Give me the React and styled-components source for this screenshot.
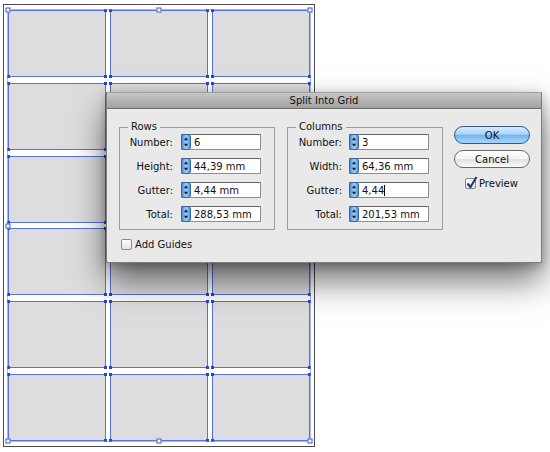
import React from "react";
import styled, { createGlobalStyle } from "styled-components";

const GlobalStyle = createGlobalStyle`
  body {
    margin: 0;
    background: #fff;
    font-family: "DejaVu Sans", "Liberation Sans", sans-serif;
  }
`;

const Stage = styled.div`
  position: relative;
  width: 550px;
  height: 452px;
  overflow: hidden;
  box-sizing: border-box;
  padding: 4px 0 0 3px;
  background: #fff;
`;

const Artboard = styled.div`
  width: 312px;
  height: 443px;
  box-sizing: border-box;
  border: 1px solid #4d4d4d;
  padding: 5px 4px;
`;

const Grid = styled.div`
  position: relative;
  display: grid;
  grid-template-columns: repeat(3, 98px);
  grid-template-rows: repeat(6, 1fr);
  column-gap: 4px;
  row-gap: 5.6px;
  height: 431px;
`;

const Cell = styled.div`
  position: relative;
  background: #dddcdf;
  border: 1px solid #5573dc;
`;

const Anchor = styled.span`
  position: absolute;
  width: 3px;
  height: 3px;
  background: #2447c9;
  ${(p) => (p.$top ? "top: -2px;" : "bottom: -2px;")}
  ${(p) => (p.$left ? "left: -2px;" : "right: -2px;")}
`;

const Bounds = styled.div`
  position: absolute;
  inset: -1px;
  border: 1px solid rgba(110, 140, 230, 0.6);
  pointer-events: none;
`;

const Handle = styled.span`
  position: absolute;
  width: 5px;
  height: 5px;
  box-sizing: border-box;
  background: #fff;
  border: 1px solid #3557d2;
  transform: translate(-50%, -50%);
`;

const Dialog = styled.div`
  position: absolute;
  left: 106px;
  top: 92px;
  width: 436px;
  height: 171px;
  box-sizing: border-box;
  border: 1px solid #7d7d7d;
  border-top-color: #a0a0a0;
  background: #e9e9e9;
  box-shadow: 0 18px 32px rgba(0, 0, 0, 0.55), 0 3px 10px rgba(0, 0, 0, 0.25);
  font-size: 10px;
  color: #111;
  display: flex;
  flex-direction: column;
`;

const TitleBar = styled.div`
  height: 15px;
  line-height: 15px;
  text-align: center;
  background: linear-gradient(#c6c6c6, #a2a2a2);
  border-bottom: 1px solid #6c6c6c;
`;

const Body = styled.div`
  padding: 11px 11px 0 12px;
  display: flex;
  flex-direction: column;
`;

const TopRow = styled.div`
  display: flex;
  align-items: flex-start;
`;

const Group = styled.fieldset`
  margin: 0 ${(p) => p.$gap}px 0 0;
  padding: 0 13px 7px 0;
  width: 156px;
  min-width: 0;
  box-sizing: border-box;
  border: 1px solid #9a9a9a;
`;

const Legend = styled.legend`
  margin-left: 8px;
  padding: 0 3px;
  line-height: 14px;
`;

const FieldList = styled.div`
  display: flex;
  flex-direction: column;
  gap: 8px;
`;

const FieldRow = styled.div`
  display: flex;
  align-items: center;
  height: 16px;
`;

const Label = styled.span`
  width: ${(p) => p.$w}px;
  margin-right: ${(p) => p.$gap}px;
  text-align: right;
  white-space: nowrap;
`;

const Field = styled.div`
  width: 80px;
  height: 16px;
  box-sizing: border-box;
  display: flex;
  align-items: center;
  background: #fff;
  border: 1px solid #8e8e8e;
  border-top-color: #666;
`;

const SpinnerIcon = styled.svg`
  flex: none;
  margin: -1px 0 -1px -1px;
`;

const Value = styled.span`
  padding-left: 3px;
  white-space: nowrap;
`;

const Caret = styled.span`
  width: 1px;
  height: 11px;
  background: #000;
`;

const ButtonColumn = styled.div`
  width: 76px;
  margin-top: 6px;
  display: flex;
  flex-direction: column;
  gap: 6px;
`;

const Button = styled.button`
  height: 18px;
  padding: 0;
  border-radius: 9px;
  font-family: inherit;
  font-size: 10px;
  color: #111;
  border: 1px solid ${(p) => (p.$primary ? "#35598f" : "#6a6a6a")};
  background: ${(p) =>
    p.$primary
      ? "linear-gradient(#d8ecfd 0%, #aad3f8 45%, #72b5ef 52%, #a6d6fb 100%)"
      : "linear-gradient(#ffffff 0%, #f3f3f3 48%, #e2e2e2 52%, #fafafa 100%)"};
`;

const CheckRow = styled.label`
  display: flex;
  align-items: center;
  gap: 3px;
  margin: ${(p) => p.$margin};
`;

const Box = styled.span`
  position: relative;
  width: 11px;
  height: 11px;
  box-sizing: border-box;
  border: 1px solid #8a8a8a;
  border-radius: 2px;
  background: linear-gradient(#fdfdfd, #e4e4e4);
`;

const Tick = styled.svg`
  position: absolute;
  left: 0;
  top: -3px;
`;

const Spinner = () => (
  <SpinnerIcon width="10" height="16" viewBox="0 0 10 16">
    <defs>
      <linearGradient id="spin" x1="0" y1="0" x2="1" y2="0">
        <stop offset="0" stopColor="#3f86d8" />
        <stop offset="0.5" stopColor="#a4cff6" />
        <stop offset="1" stopColor="#4c92df" />
      </linearGradient>
    </defs>
    <rect x="0.5" y="0.5" width="9" height="15" rx="2.5" fill="url(#spin)" stroke="#3466a8" />
    <path d="M5 3.5 L7 6.2 L3 6.2Z" fill="#111" />
    <path d="M5 12.5 L7 9.8 L3 9.8Z" fill="#111" />
  </SpinnerIcon>
);

const Checkbox = ({ checked }) => (
  <Box>
    {checked && (
      <Tick width="12" height="13" viewBox="0 0 12 13">
        <path d="M1.5 7.5 L4.5 11 L10.5 1" fill="none" stroke="#1c2f78" strokeWidth="2" />
      </Tick>
    )}
  </Box>
);

const rowFields = [
  ["Number:", "6"],
  ["Height:", "44,39 mm"],
  ["Gutter:", "4,44 mm"],
  ["Total:", "288,53 mm"],
];

const colFields = [
  ["Number:", "3"],
  ["Width:", "64,36 mm"],
  ["Gutter:", "4,44", true],
  ["Total:", "201,53 mm"],
];

const handles = [
  [0, 0], [50, 0], [100, 0],
  [0, 50], [100, 50],
  [0, 100], [50, 100], [100, 100],
];

const FieldGroup = ({ title, fields, labelWidth, labelGap, gap }) => (
  <Group $gap={gap}>
    <Legend>{title}</Legend>
    <FieldList>
      {fields.map(([label, value, editing]) => (
        <FieldRow key={label}>
          <Label $w={labelWidth} $gap={labelGap}>{label}</Label>
          <Field>
            <Spinner />
            <Value>{value}</Value>
            {editing && <Caret />}
          </Field>
        </FieldRow>
      ))}
    </FieldList>
  </Group>
);

export default function App() {
  return (
    <Stage>
      <GlobalStyle />
      <Artboard>
        <Grid>
          {Array.from({ length: 18 }).map((_, i) => (
            <Cell key={i}>
              <Anchor $top $left />
              <Anchor $top />
              <Anchor $left />
              <Anchor />
            </Cell>
          ))}
          <Bounds />
          {handles.map(([x, y]) => (
            <Handle key={`${x}-${y}`} style={{ left: `${x}%`, top: `${y}%` }} />
          ))}
        </Grid>
      </Artboard>

      <Dialog>
        <TitleBar>Split Into Grid</TitleBar>
        <Body>
          <TopRow>
            <FieldGroup title="Rows" fields={rowFields} labelWidth={53} labelGap={8} gap={12} />
            <FieldGroup title="Columns" fields={colFields} labelWidth={54} labelGap={7} gap={11} />
            <ButtonColumn>
              <Button $primary>OK</Button>
              <Button>Cancel</Button>
              <CheckRow $margin="4px 0 0 11px">
                <Checkbox checked />
                Preview
              </CheckRow>
            </ButtonColumn>
          </TopRow>
          <CheckRow $margin="9px 0 0 2px">
            <Checkbox />
            Add Guides
          </CheckRow>
        </Body>
      </Dialog>
    </Stage>
  );
}
